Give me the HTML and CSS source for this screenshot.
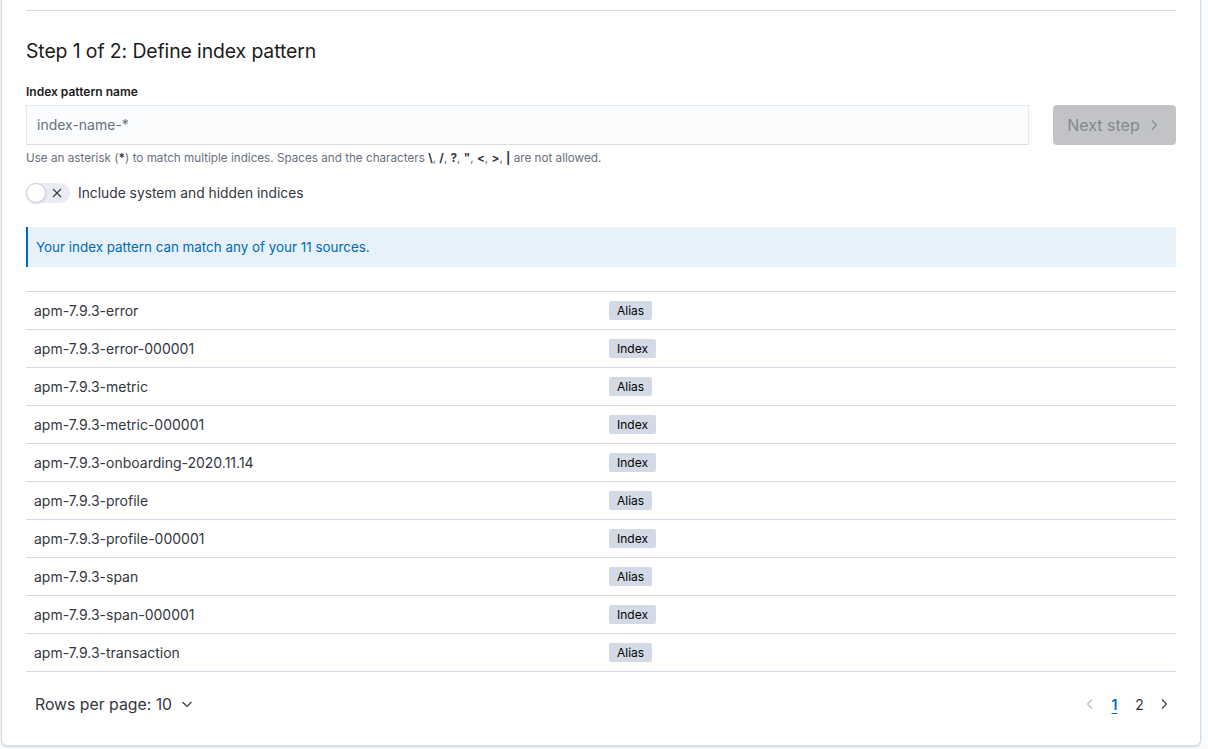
FILE: index.html
```html
<!DOCTYPE html>
<html>
<head>
<meta charset="utf-8">
<link rel="stylesheet" href="styles.css">
</head>
<body>
<div class="panel">
  <hr class="rule">
  <h2 class="title">Step 1 of 2: Define index pattern</h2>
  <div class="label">Index pattern name</div>
  <div class="input-row">
    <div class="input">index-name-*</div>
    <div class="btn">Next step
      <svg width="16" height="16" viewBox="0 0 16 16"><path d="M6 3.5 L10.5 8 L6 12.5" fill="none" stroke="currentColor" stroke-width="1.1"/></svg>
    </div>
  </div>
  <div class="help">Use an asterisk (<b>*</b>) to match multiple indices. Spaces and the characters <b>\</b>, <b>/</b>, <b>?</b>, <b>"</b>, <b>&lt;</b>, <b>&gt;</b>, <b>|</b> are not allowed.</div>
  <div class="switch-row">
    <span class="switch"><span class="knob"></span>
      <svg class="x" width="12" height="12" viewBox="0 0 12 12"><path d="M2 2 L10 10 M10 2 L2 10" stroke="#343741" stroke-width="1.1"/></svg>
    </span>
    <span class="switch-label">Include system and hidden indices</span>
  </div>
  <div class="callout">Your index pattern can match any of your 11 sources.</div>
  <div class="table">
    <div class="row"><div class="cell">apm-7.9.3-error</div><div class="cell"><span class="badge">Alias</span></div></div>
    <div class="row"><div class="cell">apm-7.9.3-error-000001</div><div class="cell"><span class="badge">Index</span></div></div>
    <div class="row"><div class="cell">apm-7.9.3-metric</div><div class="cell"><span class="badge">Alias</span></div></div>
    <div class="row"><div class="cell">apm-7.9.3-metric-000001</div><div class="cell"><span class="badge">Index</span></div></div>
    <div class="row"><div class="cell">apm-7.9.3-onboarding-2020.11.14</div><div class="cell"><span class="badge">Index</span></div></div>
    <div class="row"><div class="cell">apm-7.9.3-profile</div><div class="cell"><span class="badge">Alias</span></div></div>
    <div class="row"><div class="cell">apm-7.9.3-profile-000001</div><div class="cell"><span class="badge">Index</span></div></div>
    <div class="row"><div class="cell">apm-7.9.3-span</div><div class="cell"><span class="badge">Alias</span></div></div>
    <div class="row"><div class="cell">apm-7.9.3-span-000001</div><div class="cell"><span class="badge">Index</span></div></div>
    <div class="row"><div class="cell">apm-7.9.3-transaction</div><div class="cell"><span class="badge">Alias</span></div></div>
  </div>
  <div class="footer">
    <div class="rows-per-page">Rows per page: 10
      <svg width="16" height="16" viewBox="0 0 16 16"><path d="M3.5 6 L8 10.5 L12.5 6" fill="none" stroke="#343741" stroke-width="1.1"/></svg>
    </div>
    <div class="pager">
      <svg class="arrow disabled" width="16" height="16" viewBox="0 0 16 16"><path d="M10 3.5 L5.5 8 L10 12.5" fill="none" stroke="currentColor" stroke-width="1.1"/></svg>
      <span class="page current">1</span>
      <span class="page">2</span>
      <svg class="arrow" width="16" height="16" viewBox="0 0 16 16"><path d="M6 3.5 L10.5 8 L6 12.5" fill="none" stroke="currentColor" stroke-width="1.1"/></svg>
    </div>
  </div>
</div>
</body>
</html>
```
FILE: styles.css
```css
* { box-sizing: border-box; }
html, body { margin: 0; padding: 0; }
body {
  background: #fafbfd;
  font-family: Inter, "Liberation Sans", sans-serif;
  color: #343741;
  width: 1208px;
  height: 749px;
  overflow: hidden;
}
.panel {
  margin-left: 1px;
  margin-top: -6px;
  width: 1200px;
  background: #fff;
  border: 1px solid #d3dae6;
  border-radius: 0 0 6px 6px;
  box-shadow: 0 1px 2px rgba(0,0,0,0.06), 0 2px 3px rgba(152,162,179,0.15);
  padding: 15px 24px 0 24px;
  height: 752px;
}
.rule {
  margin: 0;
  border: 0;
  border-top: 1px solid #d3dae6;
  height: 0;
}
.title {
  margin: 26px 0 0 0;
  font-size: 19.4px;
  line-height: 28px;
  font-weight: 400;
  color: #1a1c21;
  letter-spacing: -0.1px;
}
.label {
  margin-top: 19px;
  font-size: 12px;
  line-height: 16px;
  font-weight: 600;
  color: #1a1c21;
}
.input-row {
  margin-top: 5px;
  display: flex;
  gap: 24px;
  align-items: center;
}
.input {
  flex: 1;
  height: 40px;
  background: #fbfcfd;
  border: 1px solid #e4e8f0;
  border-bottom-color: #d9dee8;
  padding: 0 10px;
  font-size: 14px;
  line-height: 37px;
  color: #69707d;
}
.btn {
  width: 123px;
  height: 40px;
  background: #c2c3c6;
  border-radius: 4px;
  display: flex;
  align-items: center;
  justify-content: center;
  gap: 6px;
  font-size: 16px;
  line-height: 18px;
  padding-bottom: 1px;
  color: #85888e;
}
.help {
  margin-top: 5px;
  font-size: 11.7px;
  line-height: 16px;
  color: #69707d;
}
.help b { color: #343741; font-weight: 700; }
.switch-row {
  margin-top: 17px;
  display: flex;
  align-items: center;
  gap: 8px;
  height: 20px;
}
.switch {
  position: relative;
  width: 44px;
  height: 20px;
  border-radius: 10px;
  background: #e9edf3;
  display: inline-block;
}
.knob {
  position: absolute;
  left: 0;
  top: 0;
  width: 20px;
  height: 20px;
  border-radius: 50%;
  background: #fff;
  border: 1px solid #c9cfd9;
  box-shadow: 0 1px 2px rgba(0,0,0,0.12);
}
.switch .x {
  position: absolute;
  left: 25px;
  top: 4px;
}
.switch-label {
  font-size: 13.8px;
  color: #343741;
}
.callout {
  margin-top: 24px;
  height: 40px;
  background: #e6f1fa;
  border-left: 2px solid #006bb8;
  padding: 0 8px;
  font-size: 13.4px;
  line-height: 40px;
  color: #006bb8;
}
.table {
  margin-top: 24px;
  border-top: 1px solid #d3dae6;
}
.row {
  display: flex;
  height: 38px;
  border-bottom: 1px solid #d3dae6;
  align-items: center;
}
.cell {
  flex: 1;
  padding: 0 8px;
  font-size: 14px;
  color: #343741;
}
.badge {
  display: inline-block;
  background: #d3dae6;
  color: #000;
  font-size: 12px;
  line-height: 19px;
  padding: 0 8px;
  border-radius: 2px;
  font-weight: 400;
}
.footer {
  height: 64px;
  display: flex;
  align-items: center;
  justify-content: space-between;
  padding: 0 0 0 9px;
}
.rows-per-page {
  display: flex;
  align-items: center;
  gap: 7px;
  font-size: 15.8px;
  color: #343741;
}
.pager {
  display: flex;
  align-items: center;
  gap: 8px;
  padding-right: 4px;
}
.arrow { color: #343741; }
.arrow.disabled { color: #b4bac4; }
.page {
  width: 17px;
  text-align: center;
  font-size: 14px;
  color: #343741;
}
.page.current {
  color: #006bb8;
  text-decoration: underline;
  text-underline-offset: 3px;
  font-weight: 600;
}
```
